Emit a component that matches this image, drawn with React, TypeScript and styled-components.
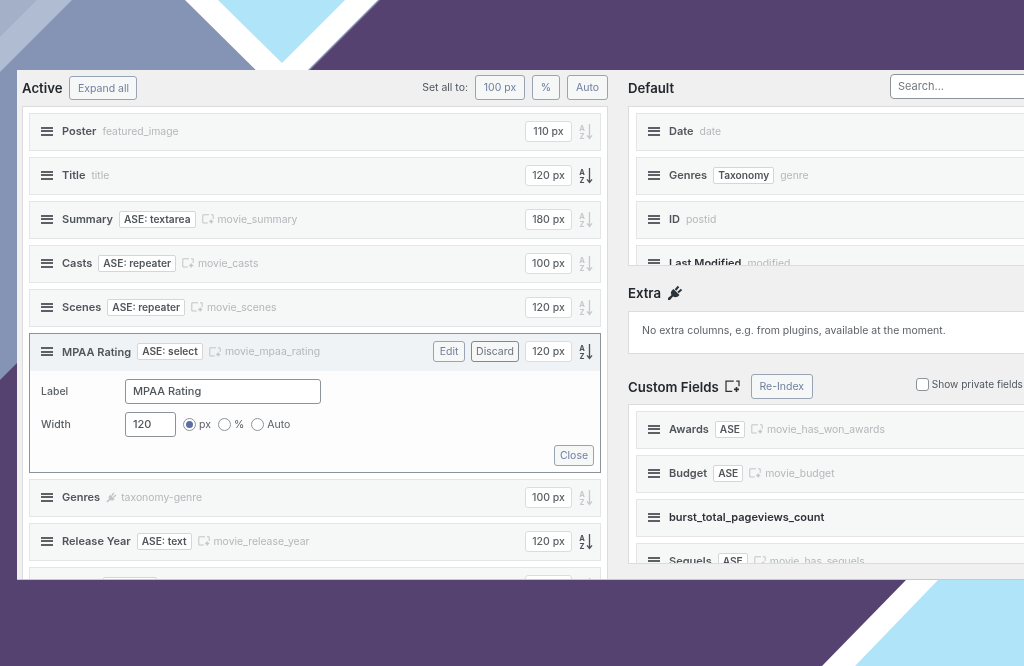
import React from "react";
import styled, { createGlobalStyle } from "styled-components";

const GlobalStyle = createGlobalStyle`
  html, body {
    margin: 0;
    padding: 0;
    width: 1024px;
    height: 666px;
    overflow: hidden;
    background: #564270;
    font-family: Inter, "Liberation Sans", sans-serif;
  }
`;

const Page = styled.div`
  position: relative;
  width: 1024px;
  height: 666px;
  padding: 70px 0 0 17px;
  box-sizing: border-box;
  overflow: hidden;
`;

const Backdrop = styled.svg`
  position: absolute;
  inset: 0;
`;

const Panel = styled.main`
  position: relative;
  display: flex;
  width: 1007px;
  height: 510px;
  box-sizing: border-box;
  padding-left: 5px;
  gap: 20px;
  overflow: hidden;
  background: #f0f0f1;
  border-bottom: 1px solid #c8c6cf;
  filter: blur(0.7px);
`;

const Column = styled.section<{ $width: number }>`
  display: flex;
  flex-direction: column;
  flex: none;
  width: ${({ $width }) => $width}px;
`;

const Header = styled.div<{ $height?: number; $top?: number }>`
  display: flex;
  align-items: center;
  height: ${({ $height }) => $height ?? 36}px;
  box-sizing: border-box;
  padding-top: ${({ $top }) => $top ?? 0}px;
  flex: none;
`;

const Title = styled.h2`
  display: flex;
  align-items: center;
  gap: 6px;
  margin: 0;
  font-size: 13.2px;
  font-weight: 600;
  color: #23282d;
`;

const HeaderRight = styled.div`
  display: flex;
  align-items: center;
  gap: 7px;
  margin-left: auto;
  margin-bottom: 2px;
`;

const SetAll = styled.span`
  font-size: 10.5px;
  color: #50575e;
`;

const Button = styled.button<{ $w: number; $h?: number; $strong?: boolean; $left?: number }>`
  flex: none;
  width: ${({ $w }) => $w}px;
  height: ${({ $h }) => $h ?? 25}px;
  margin-left: ${({ $left }) => $left ?? 0}px;
  padding: 0;
  font: 400 10.5px Inter, "Liberation Sans", sans-serif;
  color: ${({ $strong }) => ($strong ? "#6b7480" : "#6f7f9f")};
  background: #f6f7f7;
  border: 1px solid ${({ $strong }) => ($strong ? "#7f8a94" : "#98a4b4")};
  border-radius: 3px;
`;

const Box = styled.div<{ $height: number; $pad?: number }>`
  display: flex;
  flex-direction: column;
  gap: 6px;
  flex: none;
  height: ${({ $height }) => $height}px;
  box-sizing: border-box;
  padding: 6px 6px 0 ${({ $pad }) => $pad ?? 6}px;
  overflow: hidden;
  background: #fff;
  border: 1px solid #dcdcde;
`;

const Row = styled.div<{ $open?: boolean }>`
  flex: none;
  box-sizing: border-box;
  border: ${({ $open }) => ($open ? "1px solid #8c9499" : "1px solid #e4e5e6")};
  background: ${({ $open }) => ($open ? "#fdfdfe" : "#f6f7f7")};
`;

const RowHead = styled.div<{ $open?: boolean }>`
  display: flex;
  align-items: center;
  height: ${({ $open }) => ($open ? 37 : 36)}px;
  box-sizing: border-box;
  padding: 0 7px 2px 11px;
  background: ${({ $open }) => ($open ? "#f0f3f5" : "transparent")};
`;

const Handle = styled.span`
  display: flex;
  flex-direction: column;
  gap: 1.5px;
  flex: none;
  width: 12px;
  margin-right: 9px;

  i {
    display: block;
    height: 2px;
    background: #5c6166;
  }
`;

const Name = styled.strong`
  flex: none;
  font-size: 11px;
  font-weight: 600;
  color: #50555a;
`;

const DarkName = styled(Name)`
  color: #2f3338;
`;

const Tag = styled.span`
  flex: none;
  margin-left: 6px;
  padding: 1px 4px;
  font-size: 10.2px;
  font-weight: 600;
  line-height: 13px;
  color: #50555a;
  background: #fff;
  border: 1px solid #d5d6d8;
  border-radius: 2px;
`;

const GhostTag = styled(Tag)`
  width: 54px;
  height: 16px;
  box-sizing: border-box;
  margin-left: 41px;
`;

const Slug = styled.span`
  display: flex;
  align-items: center;
  gap: 4px;
  flex: none;
  margin-left: 6px;
  font-size: 10.4px;
  color: #b4b7ba;
`;

const RowTools = styled.div`
  display: flex;
  align-items: center;
  gap: 6px;
  margin-left: auto;
`;

const WidthPill = styled.span`
  flex: none;
  width: 47px;
  height: 21px;
  box-sizing: border-box;
  font-size: 10.5px;
  font-weight: 500;
  line-height: 19px;
  text-align: center;
  color: #5c6166;
  background: #fff;
  border: 1px solid #dcdcde;
  border-radius: 3px;
`;

const Editor = styled.div`
  position: relative;
  display: grid;
  grid-template-columns: 84px auto;
  grid-auto-rows: 25px;
  row-gap: 8px;
  height: 101px;
  box-sizing: border-box;
  padding: 8px 0 0 11px;
  font-size: 10.5px;
  color: #5c6166;
`;

const FieldLabel = styled.label`
  align-self: center;
  font-weight: 500;
`;

const TextField = styled.div<{ $w: number }>`
  width: ${({ $w }) => $w}px;
  height: 25px;
  box-sizing: border-box;
  padding-left: 7px;
  font-size: 11px;
  font-weight: 500;
  line-height: 23px;
  color: #50555a;
  background: #fff;
  border: 1px solid #8c9499;
  border-radius: 3px;
`;

const WidthLine = styled.div`
  display: flex;
  align-items: center;
`;

const Radio = styled.span<{ $on?: boolean }>`
  flex: none;
  display: flex;
  align-items: center;
  justify-content: center;
  width: 13px;
  height: 13px;
  box-sizing: border-box;
  margin: 0 3px 0 7px;
  background: #fff;
  border: 1px solid #8c9499;
  border-radius: 50%;

  &::after {
    content: "";
    display: ${({ $on }) => ($on ? "block" : "none")};
    width: 7px;
    height: 7px;
    border-radius: 50%;
    background: #5a6fa5;
  }
`;

const CloseButton = styled(Button)`
  position: absolute;
  right: 6px;
  bottom: 6px;
`;

const Notice = styled.div`
  flex: none;
  height: 43px;
  box-sizing: border-box;
  padding-left: 13px;
  font-size: 10.5px;
  line-height: 38px;
  color: #5c6166;
  background: #fff;
  border: 1px solid #dcdcde;
`;

const Search = styled.div`
  position: absolute;
  top: 4px;
  left: 873px;
  width: 200px;
  height: 25px;
  box-sizing: border-box;
  padding-left: 7px;
  font-size: 11px;
  line-height: 23px;
  color: #71787e;
  background: #fff;
  border: 1px solid #8c9499;
  border-radius: 4px;
`;

const PrivateToggle = styled.label`
  display: flex;
  align-items: center;
  gap: 3px;
  margin: 0 0 5px 103px;
  font-size: 10.1px;
  white-space: nowrap;
  color: #50575e;
`;

const CheckBox = styled.span`
  flex: none;
  width: 13px;
  height: 13px;
  box-sizing: border-box;
  background: #fff;
  border: 1px solid #8c9499;
  border-radius: 3px;
`;

function Sort({ on }: { on?: boolean }) {
  const color = on ? "#4c5257" : "#c6c9cc";
  return (
    <svg width="15" height="17" viewBox="0 0 15 17">
      <text x="4" y="7.5" fontSize="7.5" fontWeight="700" textAnchor="middle" fill={color} fontFamily="Inter, sans-serif">A</text>
      <text x="4" y="15.5" fontSize="7.5" fontWeight="700" textAnchor="middle" fill={color} fontFamily="Inter, sans-serif">Z</text>
      <path d="M11.5 1v14M9 12.4 11.5 15.4 14 12.4" fill="none" stroke={color} strokeWidth="1.3" />
    </svg>
  );
}

function FieldIcon({ size = 12, color = "#c2c5c8" }: { size?: number; color?: string }) {
  return (
    <svg width={size} height={(size * 10) / 12} viewBox="0 0 12 10">
      <path d="M7 .8H.8v8.2h5M11.2 5V.8H9" fill="none" stroke={color} strokeWidth="1" />
      <path d="M9.2 5.5v4M7.2 7.5h4" stroke={color} strokeWidth="1.3" />
    </svg>
  );
}

function PlugIcon({ size = 11, color = "#c2c5c8" }: { size?: number; color?: string }) {
  return (
    <svg width={size} height={size} viewBox="0 0 16 16">
      <path d="M6.5 4 12.5 10C10.5 12.5 8 12.8 6 11.5L3 15H1V13L4.5 10C3.2 8 3.8 6 6.5 4Z" fill={color} />
      <path d="M8.5 5 11.5 1.5M11 7.5 14.5 4.5" fill="none" stroke={color} strokeWidth="2" />
    </svg>
  );
}

type Col = { name: string; tag?: string; slug?: string; icon?: "field" | "plug"; px?: number; sorted?: boolean; dark?: boolean };

function Head({ c, open, children }: { c: Col; open?: boolean; children?: React.ReactNode }) {
  const N = c.dark ? DarkName : Name;
  return (
    <RowHead $open={open}>
      <Handle><i /><i /><i /></Handle>
      <N>{c.name}</N>
      {c.tag && <Tag>{c.tag}</Tag>}
      {c.slug && (
        <Slug>
          {c.icon === "field" && <FieldIcon />}
          {c.icon === "plug" && <PlugIcon />}
          {c.slug}
        </Slug>
      )}
      {c.px && (
        <RowTools>
          {children}
          <WidthPill>{c.px} px</WidthPill>
          <Sort on={c.sorted} />
        </RowTools>
      )}
    </RowHead>
  );
}

const activeTop: Col[] = [
  { name: "Poster", slug: "featured_image", px: 110 },
  { name: "Title", slug: "title", px: 120, sorted: true },
  { name: "Summary", tag: "ASE: textarea", slug: "movie_summary", icon: "field", px: 180 },
  { name: "Casts", tag: "ASE: repeater", slug: "movie_casts", icon: "field", px: 100 },
  { name: "Scenes", tag: "ASE: repeater", slug: "movie_scenes", icon: "field", px: 120 },
];

const activeBottom: Col[] = [
  { name: "Genres", slug: "taxonomy-genre", icon: "plug", px: 100 },
  { name: "Release Year", tag: "ASE: text", slug: "movie_release_year", icon: "field", px: 120, sorted: true },
];

const defaults: Col[] = [
  { name: "Date", slug: "date" },
  { name: "Genres", tag: "Taxonomy", slug: "genre" },
  { name: "ID", slug: "postid" },
  { name: "Last Modified", slug: "modified", dark: true },
];

const customs: Col[] = [
  { name: "Awards", tag: "ASE", slug: "movie_has_won_awards", icon: "field" },
  { name: "Budget", tag: "ASE", slug: "movie_budget", icon: "field" },
  { name: "burst_total_pageviews_count", dark: true },
  { name: "Sequels", tag: "ASE", slug: "movie_has_sequels", icon: "field" },
];

const rating: Col = { name: "MPAA Rating", tag: "ASE: select", slug: "movie_mpaa_rating", icon: "field", px: 120, sorted: true };

export default function App() {
  return (
    <>
      <GlobalStyle />
      <Page>
        <Backdrop width="1024" height="666" viewBox="0 0 1024 666">
          <rect width="1024" height="666" fill="#564270" />
          <polygon points="0,0 380,0 0,380" fill="#8593b5" />
          <polygon points="0,0 72,0 0,72" fill="#b0bcd1" />
          <polygon points="0,0 37,0 0,37" fill="#a3b0c8" />
          <polygon points="185,0 378,0 282,96" fill="#fff" />
          <polygon points="218,0 345,0 282,63" fill="#b0e4f9" />
          <polygon points="906,580 1024,580 1024,666 822,666" fill="#fff" />
          <polygon points="938,580 1024,580 1024,666 855,666" fill="#b0e4f9" />
        </Backdrop>
        <Panel>
          <Column $width={586}>
            <Header>
              <Title>Active</Title>
              <Button $w={68} $h={24} $left={7}>Expand all</Button>
              <HeaderRight>
                <SetAll>Set all to:</SetAll>
                <Button $w={50}>100 px</Button>
                <Button $w={28}>%</Button>
                <Button $w={41}>Auto</Button>
              </HeaderRight>
            </Header>
            <Box $height={474}>
              {activeTop.map((c) => (
                <Row key={c.name}><Head c={c} /></Row>
              ))}
              <Row $open>
                <Head c={rating} open>
                  <Button $w={32} $h={21}>Edit</Button>
                  <Button $w={48} $h={21} $strong>Discard</Button>
                </Head>
                <Editor>
                  <FieldLabel>Label</FieldLabel>
                  <TextField $w={196}>MPAA Rating</TextField>
                  <FieldLabel>Width</FieldLabel>
                  <WidthLine>
                    <TextField $w={51}>120</TextField>
                    <Radio $on />px
                    <Radio />%
                    <Radio />Auto
                  </WidthLine>
                  <CloseButton $w={40} $h={21}>Close</CloseButton>
                </Editor>
              </Row>
              {activeBottom.map((c) => (
                <Row key={c.name}><Head c={c} /></Row>
              ))}
              <Row>
                <RowHead>
                  <Handle />
                  <GhostTag />
                  <RowTools>
                    <WidthPill />
                    <Sort />
                  </RowTools>
                </RowHead>
              </Row>
            </Box>
          </Column>
          <Column $width={420}>
            <Header>
              <Title>Default</Title>
            </Header>
            <Box $height={160} $pad={7}>
              {defaults.map((c) => (
                <Row key={c.name}><Head c={c} /></Row>
              ))}
            </Box>
            <Header $height={45} $top={8}>
              <Title>Extra <PlugIcon size={16} color="#2c3338" /></Title>
            </Header>
            <Notice>No extra columns, e.g. from plugins, available at the moment.</Notice>
            <Header $height={50} $top={15}>
              <Title>Custom Fields <FieldIcon size={15} color="#2c3338" /></Title>
              <Button $w={62} $left={11}>Re-Index</Button>
              <PrivateToggle><CheckBox />Show private fields</PrivateToggle>
            </Header>
            <Box $height={160} $pad={7}>
              {customs.map((c) => (
                <Row key={c.name}><Head c={c} /></Row>
              ))}
            </Box>
          </Column>
          <Search>Search...</Search>
        </Panel>
      </Page>
    </>
  );
}
